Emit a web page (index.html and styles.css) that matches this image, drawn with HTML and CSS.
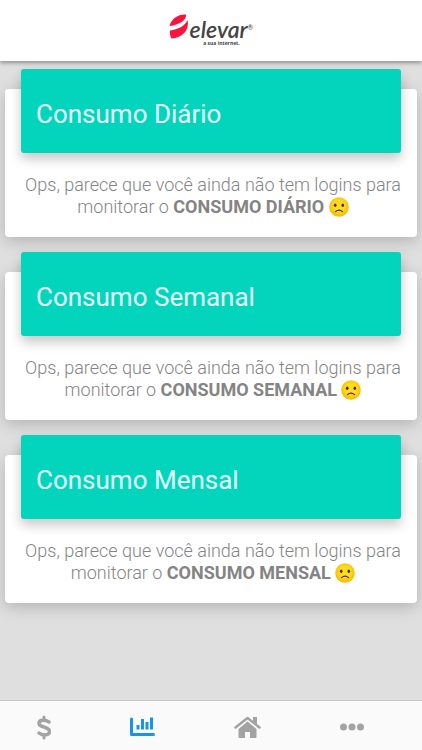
FILE: index.html
```html
<!DOCTYPE html>
<html lang="pt-BR">
<head>
  <meta charset="UTF-8" />
  <meta name="viewport" content="width=device-width, initial-scale=1.0" />
  <title>Elevar - Consumo</title>
  <link rel="stylesheet" href="styles.css">
</head>
<body>
  <header class="topbar">
    <svg class="logo-mark" viewBox="0 0 38 50" aria-hidden="true">
      <path d="M1 24C4 10 18 0 34 1C36 12 20 22 1 24Z" fill="#f8143c"/>
      <path d="M37 12C41 28 31 47 5 49C2 43 1 37 2 33C18 31 32 24 37 12Z" fill="#f8143c"/>
    </svg>
    <div class="logo-text">
      <span class="logo-name">elevar<sup>®</sup></span>
      <span class="logo-slogan">a sua internet.</span>
    </div>
  </header>

  <main class="content">
    <section class="card">
      <h2 class="card-title">Consumo Diário</h2>
      <p class="card-text">Ops, parece que você ainda não tem logins para monitorar o <strong>CONSUMO DIÁRIO</strong>
        <svg class="emoji" viewBox="0 0 20 20" role="img" aria-label="triste"><use href="#sad"/></svg></p>
    </section>

    <section class="card">
      <h2 class="card-title">Consumo Semanal</h2>
      <p class="card-text">Ops, parece que você ainda não tem logins para monitorar o <strong>CONSUMO SEMANAL</strong>
        <svg class="emoji" viewBox="0 0 20 20" role="img" aria-label="triste"><use href="#sad"/></svg></p>
    </section>

    <section class="card">
      <h2 class="card-title">Consumo Mensal</h2>
      <p class="card-text">Ops, parece que você ainda não tem logins para monitorar o <strong>CONSUMO MENSAL</strong>
        <svg class="emoji" viewBox="0 0 20 20" role="img" aria-label="triste"><use href="#sad"/></svg></p>
    </section>
  </main>

  <nav class="tabbar">
    <a href="#financeiro" class="tab" aria-label="Financeiro">
      <svg width="14" height="25" viewBox="0 0 14 25">
        <path d="M7 2V5M7 20V23" stroke-width="3"/>
        <path d="M12 7C9 5 2 4 2 8.500C2 13 12.500 11 12.500 16.500C12.500 21 5 20.500 2 18" stroke-width="3.500"/>
      </svg>
    </a>
    <a href="#consumo" class="tab active" aria-label="Consumo">
      <svg width="25" height="20" viewBox="0 0 25 20">
        <path d="M1.500 2V17.500H23.500" stroke-width="3"/>
        <path class="bars" d="M8 8V12.500M12.500 2V12.500M17 5V12.500M21.500 0.500V12.500" stroke-width="3"/>
      </svg>
    </a>
    <a href="#inicio" class="tab" aria-label="Início">
      <svg width="27" height="22" viewBox="0 0 27 22">
        <path d="M1.500 11.500L13.500 2L25.500 11.500" stroke-width="2.500"/>
        <path class="fill" d="M19 1H23V9L19 6ZM13.500 5.500L22.500 13V21Q22.500 22 21.500 22H16V16H11V22H5.500Q4.500 22 4.500 21V13Z"/>
      </svg>
    </a>
    <a href="#mais" class="tab" aria-label="Mais">
      <svg width="24" height="8" viewBox="0 0 24 8">
        <circle class="fill" cx="3.500" cy="4" r="3.500"/>
        <circle class="fill" cx="12" cy="4" r="3.500"/>
        <circle class="fill" cx="20.500" cy="4" r="3.500"/>
      </svg>
    </a>
  </nav>

  <!-- shared symbols -->
  <svg class="symbols" aria-hidden="true">
    <defs>
      <radialGradient id="face" cx="50%" cy="45%" r="55%">
        <stop offset="50%" stop-color="#ffdb22"/>
        <stop offset="100%" stop-color="#f7b800"/>
      </radialGradient>
    </defs>
    <symbol id="sad" viewBox="0 0 20 20">
      <circle cx="10" cy="10" r="9.800" fill="url(#face)"/>
      <ellipse cx="6.200" cy="8.300" rx="1.300" ry="1.700" fill="#45300f"/>
      <ellipse cx="13.800" cy="8.300" rx="1.300" ry="1.700" fill="#45300f"/>
      <path d="M6.500 14.600Q10 11.600 13.500 14.600" fill="none" stroke="#45300f" stroke-width="1.200" stroke-linecap="round"/>
    </symbol>
  </svg>
</body>
</html>
```

FILE: styles.css
```css
* {
  box-sizing: border-box;
}

body {
  margin: 0;
  min-height: 100vh;
  display: flex;
  flex-direction: column;
  background-color: #dfdfdf;
  font-family: Roboto, Arial, sans-serif;
}

.topbar {
  height: 61px;
  display: flex;
  justify-content: center;
  align-items: center;
  gap: 2px;
  background-color: #fff;
  box-shadow: 0 2px 4px rgba(0, 0, 0, 0.35);
}

.logo-mark {
  width: 19px;
  height: 25px;
  margin-bottom: 8px;
}

.logo-text {
  display: flex;
  flex-direction: column;
  align-items: center;
  padding-top: 2px;
  color: #444;
}

.logo-name {
  font-family: Lato, sans-serif;
  font-size: 23px;
  font-style: italic;
  font-weight: 600;
  line-height: 22px;
}

.logo-name sup {
  font-size: 7px;
  font-style: normal;
  font-weight: 400;
  line-height: 0;
  vertical-align: 8px;
}

.logo-slogan {
  font-family: "Open Sans", sans-serif;
  font-size: 5px;
  font-weight: 700;
  line-height: 6px;
}

.content {
  flex: 1;
  display: flex;
  flex-direction: column;
  gap: 35px;
  padding: 28px 5px;
}

.card {
  padding: 0 16px 19px;
  background-color: #fff;
  border-radius: 4px;
  box-shadow: 0 4px 16px rgba(0, 0, 0, 0.2);
}

.card-title {
  margin: -20px 0 21px;
  padding: 30px 15px 23px;
  background-color: #03d5bc;
  border-radius: 3px;
  box-shadow: 0 6px 12px rgba(0, 0, 0, 0.22);
  color: #e8fffc;
  font-size: 26px;
  font-weight: 400;
  line-height: 31px;
}

.card-text {
  margin: 0 -6px 0 -2px;
  color: #848484;
  font-size: 18px;
  font-weight: 300;
  line-height: 22px;
  text-align: center;
}

.card-text strong {
  font-weight: 700;
}

.emoji {
  width: 20px;
  height: 20px;
  vertical-align: -4px;
}

.tabbar {
  height: 50px;
  display: flex;
  justify-content: space-between;
  align-items: center;
  padding: 3px 58px 0 37px;
  background-color: #fafafa;
  border-top: 1px solid #c8c8c8;
}

.tab {
  display: flex;
  color: #a3a3a3;
}

.tab.active {
  color: #1595f0;
}

.tab svg {
  fill: none;
  stroke: currentColor;
  stroke-linecap: round;
  stroke-linejoin: round;
}

.tab .bars {
  stroke-linecap: butt;
}

.tab .fill {
  fill: currentColor;
  stroke: none;
}

.symbols {
  display: block;
  width: 0;
  height: 0;
}
```
